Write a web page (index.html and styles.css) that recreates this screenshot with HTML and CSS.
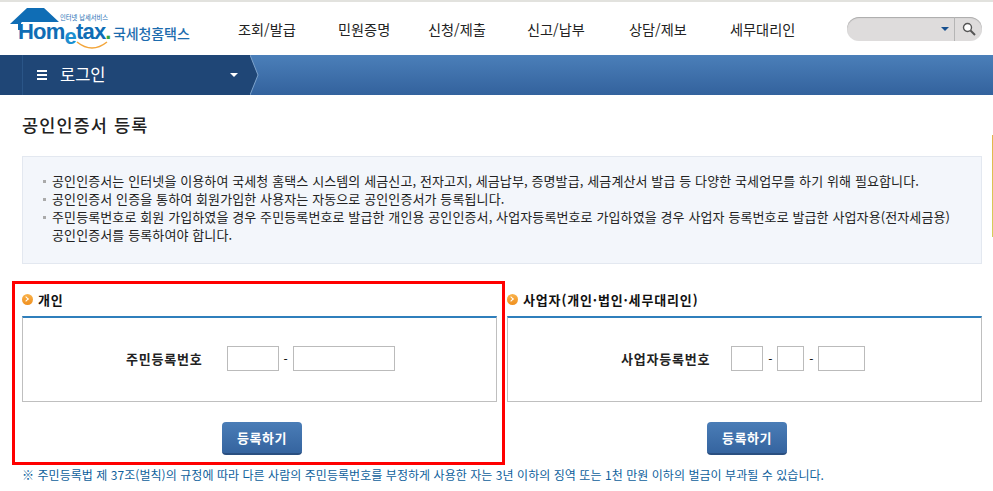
FILE: index.html
```html
<!DOCTYPE html>
<html lang="ko">
<head>
  <meta charset="UTF-8" />
  <title>공인인증서 등록 - 국세청 홈택스</title>
  <link rel="stylesheet" href="styles.css">
</head>
<body>
  <header class="top">
    <a class="logo" href="#">
      <svg class="logo-house" width="52" height="24" viewBox="0 0 52 24">
        <path d="M1 16 L18 0 L35 0 L50 14 L13 14 L12 15 L12 22 L9 22 L9 16 Z" fill="#0f6db5"/>
      </svg>
      <span class="logo-small">인터넷 납세서비스</span>
      <span class="logo-word">Hom<span class="logo-e">e</span>tax<span class="logo-dot">.</span></span>
      <svg class="logo-smile" width="32" height="10" viewBox="0 0 32 10">
        <path d="M1 1 Q16 13 31 1" fill="none" stroke="#f3a53a" stroke-width="1.5"/>
      </svg>
      <span class="logo-ko">국세청홈택스</span>
    </a>
    <nav class="menu">
      <a href="#">조회/발급</a>
      <a href="#">민원증명</a>
      <a href="#">신청/제출</a>
      <a href="#">신고/납부</a>
      <a href="#">상담/제보</a>
      <a href="#">세무대리인</a>
    </nav>
    <div class="search">
      <span class="search-field"><i class="search-caret"></i></span>
      <span class="search-btn">
        <svg width="14" height="14" viewBox="0 0 14 14">
          <circle cx="5.5" cy="5.5" r="4" fill="#fff" stroke="#555" stroke-width="1.4"/>
          <path d="M8.5 8.5 L13 13" stroke="#555" stroke-width="2"/>
        </svg>
      </span>
    </div>
  </header>

  <div class="navbar">
    <div class="crumb">
      <span class="burger"><i></i><i></i><i></i></span>
      <span class="crumb-text">로그인</span>
      <i class="crumb-caret"></i>
      <svg class="crumb-arrow" width="10" height="40" viewBox="0 0 10 40">
        <path d="M0 0 L8 20 L0 40 Z" fill="#1f4676"/>
        <path d="M0 0 L8 20 L0 40" fill="none" stroke="#7ea3cc" stroke-width="1"/>
      </svg>
    </div>
  </div>

  <i class="side-tick"></i>

  <main class="content">
    <h1 class="page-title">공인인증서 등록</h1>

    <div class="info">
      <ul>
        <li>공인인증서는 인터넷을 이용하여 국세청 홈택스 시스템의 세금신고, 전자고지, 세금납부, 증명발급, 세금계산서 발급 등 다양한 국세업무를 하기 위해 필요합니다.</li>
        <li>공인인증서 인증을 통하여 회원가입한 사용자는 자동으로 공인인증서가 등록됩니다.</li>
        <li>주민등록번호로 회원 가입하였을 경우 주민등록번호로 발급한 개인용 공인인증서, 사업자등록번호로 가입하였을 경우 사업자 등록번호로 발급한 사업자용(전자세금용)<br>공인인증서를 등록하여야 합니다.</li>
      </ul>
    </div>

    <div class="panels">
      <section class="panel panel-person">
        <h2 class="panel-title"><i class="bullet"></i>개인</h2>
        <div class="panel-box">
          <label class="field-label">주민등록번호</label>
          <div class="inputs">
            <input class="w52" type="text" />
            <span class="dash">-</span>
            <input class="w102" type="text" />
          </div>
        </div>
        <div class="actions"><button class="btn" type="button">등록하기</button></div>
      </section>

      <section class="panel panel-biz">
        <h2 class="panel-title"><i class="bullet"></i>사업자(개인·법인·세무대리인)</h2>
        <div class="panel-box">
          <label class="field-label">사업자등록번호</label>
          <div class="inputs">
            <input class="w32" type="text" />
            <span class="dash">-</span>
            <input class="w27" type="text" />
            <span class="dash">-</span>
            <input class="w47" type="text" />
          </div>
        </div>
        <div class="actions"><button class="btn" type="button">등록하기</button></div>
      </section>
    </div>

    <p class="notice">※ 주민등록법 제 37조(벌칙)의 규정에 따라 다른 사람의 주민등록번호를 부정하게 사용한 자는 3년 이하의 징역 또는 1천 만원 이하의 벌금이 부과될 수 있습니다.</p>
  </main>
</body>
</html>
```

FILE: styles.css
```css
body {
  margin: 0;
  font-family: "Noto Sans CJK KR", "Liberation Sans", sans-serif;
  font-size: 12px;
  color: #222;
  background: white;
  overflow: hidden;
}
a {
  color: inherit;
  text-decoration: none;
}
.top {
  height: 53px;
  border-top: 2px solid #e2e2de;
  display: flex;
  align-items: center;
}
.logo {
  position: relative;
  display: block;
  width: 200px;
  height: 53px;
  flex: none;
}
.logo-house {
  position: absolute;
  left: 9px;
  top: 6px;
}
.logo-small {
  position: absolute;
  left: 60px;
  top: 12px;
  font-size: 6.3px;
  line-height: 8px;
  color: #1a6db3;
}
.logo-word {
  position: absolute;
  left: 18px;
  top: 20px;
  font-family: "Liberation Sans", sans-serif;
  font-size: 22px;
  line-height: 20px;
  font-weight: bold;
  letter-spacing: -0.8px;
  color: #0f6db5;
}
.logo-e {
  position: relative;
  top: 5px;
  font-size: 22px;
  color: #1c8fd0;
}
.logo-dot {
  color: #3aa63a;
}
.logo-smile {
  position: absolute;
  left: 76px;
  top: 39px;
}
.logo-ko {
  position: absolute;
  left: 113px;
  top: 22px;
  font-size: 14px;
  line-height: 18px;
  font-weight: 500;
  letter-spacing: -0.1px;
  color: #1c6cae;
}
.menu {
  display: grid;
  grid-template-columns: 100px 90px 99px 102px 101px auto;
  margin-left: 38px;
  font-size: 14.2px;
  color: #222;
}
.search {
  margin-left: auto;
  margin-right: 11px;
  width: 135px;
  height: 24px;
  display: flex;
  background: #dedcdc;
  border-radius: 12px;
  box-shadow: inset 0 1px 1px #aaa;
}
.search-field {
  flex: 1;
  display: flex;
  align-items: center;
  justify-content: flex-end;
  padding-right: 5px;
  border-right: 1px solid #b5b5b5;
}
.search-caret {
  width: 0;
  height: 0;
  border-left: 4px solid transparent;
  border-right: 4px solid transparent;
  border-top: 4px solid #17508f;
}
.search-btn {
  width: 27px;
  display: flex;
  align-items: center;
  justify-content: center;
}
.navbar {
  height: 40px;
  background: linear-gradient(#4b7fb9, #33629d);
}
.crumb {
  position: relative;
  width: 250px;
  height: 40px;
  display: flex;
  align-items: center;
  background: #1f4676;
  color: white;
}
.crumb::before {
  content: "";
  position: absolute;
  left: 22px;
  top: 0;
  bottom: 0;
  width: 1px;
  background: #2a5587;
}
.burger {
  margin-left: 37px;
  width: 10px;
  display: flex;
  flex-direction: column;
  gap: 2px;
}
.burger i {
  display: block;
  height: 2px;
  background: white;
}
.crumb-text {
  margin: 0 0 2px 13px;
  font-size: 16.5px;
}
.crumb-caret {
  position: absolute;
  left: 230px;
  top: 18px;
  border-left: 4px solid transparent;
  border-right: 4px solid transparent;
  border-top: 4px solid white;
}
.crumb-arrow {
  position: absolute;
  left: 250px;
  top: 0;
}
.side-tick {
  position: absolute;
  left: 992px;
  top: 135px;
  width: 1px;
  height: 102px;
  background: linear-gradient(#e3b64a, #d3cf5a);
}
.content {
  padding: 0 11px 0 22px;
}
.page-title {
  margin: 19px 0 21px;
  font-size: 17.5px;
  line-height: 21px;
  font-weight: 500;
  letter-spacing: 1.1px;
  color: #222;
}
.info {
  height: 106px;
  width: 958px;
  background: #f3f6fb;
  border: 1px solid #e3e8f0;
}
.info ul {
  margin: 0;
  padding: 15px 0 0 29px;
  list-style: none;
  white-space: nowrap;
}
.info li {
  position: relative;
  line-height: 18px;
  font-size: 13px;
  letter-spacing: 0.11px;
  color: #222;
}
.info li::before {
  content: "";
  position: absolute;
  left: -9px;
  top: 8px;
  width: 3px;
  height: 3px;
  background: #aaa;
}
.panels {
  display: flex;
  gap: 10px;
  margin-top: 18px;
}
.panel {
  width: 475px;
  flex: none;
}
.panel-person {
  position: relative;
}
.panel-person::before {
  content: "";
  position: absolute;
  left: -10px;
  right: -8px;
  top: -1px;
  bottom: -10px;
  border: 3px solid #ff0000;
}
.panel-title {
  position: relative;
  display: flex;
  align-items: center;
  gap: 5px;
  margin: 0;
  height: 34px;
  font-size: 13px;
  font-weight: bold;
  letter-spacing: 0.85px;
  color: #111;
}
.bullet {
  position: relative;
  width: 11px;
  height: 11px;
  border-radius: 50%;
  background: linear-gradient(#f9b24a, #ef8f1f);
}
.bullet::after {
  content: "";
  position: absolute;
  left: 2px;
  top: 3.5px;
  width: 3px;
  height: 3px;
  border-top: 1.5px solid white;
  border-right: 1.5px solid white;
  transform: rotate(45deg);
}
.panel-box {
  position: relative;
  box-sizing: border-box;
  height: 86px;
  display: flex;
  align-items: center;
  padding: 0 0 2px 103px;
  border: 1px solid #bfbfbf;
  border-top: 2px solid #2f7fbc;
}
.panel-biz .panel-box {
  padding-left: 113px;
}
.field-label {
  font-weight: bold;
  font-size: 13px;
  letter-spacing: 0.8px;
  margin-right: 24px;
}
.panel-biz .field-label {
  margin-right: 21px;
}
.inputs {
  display: flex;
  align-items: center;
}
.inputs input {
  box-sizing: border-box;
  height: 25px;
  padding: 0;
  border: 1px solid #bbb;
  background: white;
}
.w52 { width: 52px; }
.w102 { width: 102px; }
.w32 { width: 32px; }
.w27 { width: 27px; }
.w47 { width: 47px; }
.dash {
  width: 14px;
  text-align: center;
  font-size: 12px;
  color: #000;
}
.actions {
  position: relative;
  display: flex;
  justify-content: center;
  margin-top: 20px;
  padding-left: 5px;
}
.btn {
  width: 80px;
  height: 33px;
  border: none;
  border-bottom: 2px solid #2a4f80;
  border-radius: 4px;
  background: linear-gradient(#4a7db7, #35649f);
  color: white;
  font-family: inherit;
  font-size: 13px;
  letter-spacing: 0.5px;
  font-weight: bold;
}
.notice {
  margin: 11px 0 0;
  font-size: 12px;
  line-height: 17px;
  letter-spacing: 0.05px;
  color: #0e5f9c;
  white-space: nowrap;
}
```
